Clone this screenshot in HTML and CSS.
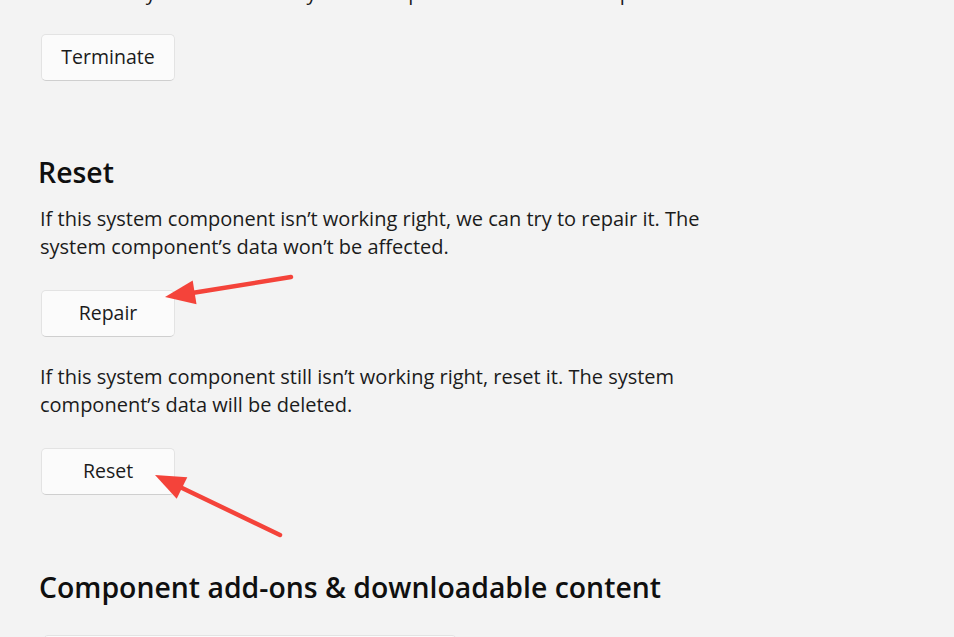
FILE: index.html
```html
<!DOCTYPE html>
<html lang="en">
<head>
<meta charset="utf-8">
<title>System component settings</title>
<link rel="stylesheet" href="styles.css">
</head>
<body>
<main class="content">
  <p class="text text-top">Immediately terminate this system component and its related processes.</p>
  <button class="btn btn-terminate">Terminate</button>

  <h2 class="heading heading-reset">Reset</h2>
  <p class="text text-repair">If this system component isn’t working right, we can try to repair it. The system component’s data won’t be affected.</p>
  <button class="btn btn-repair">Repair</button>

  <p class="text text-reset">If this system component still isn’t working right, reset it. The system component’s data will be deleted.</p>
  <button class="btn btn-reset">Reset</button>

  <h2 class="heading heading-addons">Component add-ons &amp; downloadable content</h2>
  <div class="addon-box"></div>
</main>

<svg class="annotations" width="954" height="637" viewBox="0 0 954 637" aria-hidden="true">
  <line x1="291" y1="277" x2="192" y2="293" class="arrow-line"/>
  <polygon points="165,297 192.7,280.4 196.5,304.2" class="arrow-head"/>
  <line x1="280" y1="535" x2="180" y2="487" class="arrow-line"/>
  <polygon points="155,475 187.3,477.2 176.7,498.8" class="arrow-head"/>
</svg>
</body>
</html>
```

FILE: styles.css
```css
html, body {
  margin: 0;
  padding: 0;
}

body {
  background: #f3f3f3;
  color: #1b1b1b;
  font-family: "Open Sans", "Noto Sans", "Liberation Sans", sans-serif;
  width: 954px;
  height: 637px;
  overflow: hidden;
  position: relative;
}

.content {
  display: flex;
  flex-direction: column;
  align-items: flex-start;
  padding-left: 40px;
}

.text {
  margin: 0;
  font-size: 20px;
  line-height: 28px;
  max-width: 700px;
  color: #1b1b1b;
}

.text-top {
  margin-top: -21px;
  white-space: nowrap;
}

.btn {
  margin-left: 1px;
  width: 134px;
  height: 47px;
  box-sizing: border-box;
  background: #fbfbfb;
  border: 1px solid #e3e3e3;
  border-bottom-color: #cfcfcf;
  border-radius: 5px;
  font-family: inherit;
  font-size: 19.5px;
  color: #1b1b1b;
  padding: 0 0 2px 0;
  cursor: default;
}

.btn-terminate { margin-top: 27px; }

.heading {
  margin: 0;
  font-size: 28.4px;
  line-height: 38px;
  font-weight: 600;
  color: #0f0f0f;
}

.heading-reset { margin-top: 72px; margin-left: -2px; }
.text-repair { margin-top: 14px; }
.btn-repair { margin-top: 29px; }
.text-reset { margin-top: 26px; }
.btn-reset { margin-top: 29px; }
.heading-addons { margin-top: 73px; margin-left: -1px; }

.addon-box {
  margin-top: 29px;
  margin-left: 3px;
  width: 414px;
  height: 60px;
  box-sizing: border-box;
  background: #fbfbfb;
  border: 1px solid #e3e3e3;
  border-radius: 5px;
}

.annotations {
  position: absolute;
  left: 0;
  top: 0;
  pointer-events: none;
}

.arrow-line {
  stroke: #f4433a;
  stroke-width: 4.5;
  stroke-linecap: round;
}

.arrow-head {
  fill: #f4433a;
}
```
